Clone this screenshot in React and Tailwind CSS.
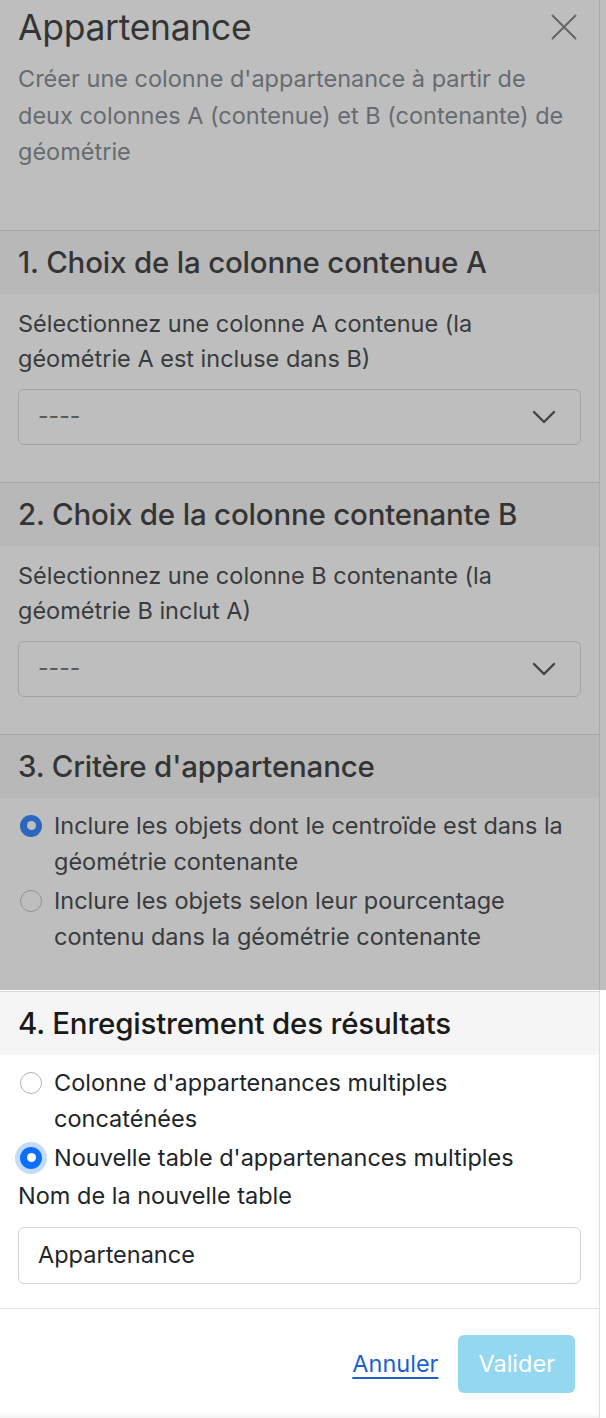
import React from 'react';

const font = { fontFamily: 'Inter, "Noto Sans", sans-serif' };

const Chevron = () => (
  <svg width="24" height="14" viewBox="0 0 24 14" fill="none">
    <path d="M2 2l10 10L22 2" stroke="#333" strokeWidth="2.4" strokeLinecap="round" strokeLinejoin="round" />
  </svg>
);

const Radio = ({ checked, focus }) => (
  <span
    className={
      'mt-[7px] w-[22px] h-[22px] shrink-0 rounded-full flex items-center justify-center ' +
      (checked ? 'bg-[#0d6efd] ' : 'border border-[#b5b5b5] bg-white ') +
      (focus ? 'ring-[5px] ring-[#0d6efd]/25' : '')
    }
  >
    {checked && <span className="w-[9px] h-[9px] rounded-full bg-white" />}
  </span>
);

const RadioRow = ({ checked, focus, children }) => (
  <label className="flex items-start gap-[12px] pl-[2px]">
    <Radio checked={checked} focus={focus} />
    <span className="text-[23.5px] leading-[36px] text-[#212529]">{children}</span>
  </label>
);

const SectionHeader = ({ children }) => (
  <div className="border-t border-[#d9d9d9] bg-[#f5f5f5] h-[64px] flex items-center px-[18px]">
    <h2 className="text-[29.5px] font-medium text-[#1a1a1a] tracking-[-0.2px]">{children}</h2>
  </div>
);

const Select = () => (
  <div className="mt-[13px] h-[56px] rounded-[6px] border border-[#ced4da] bg-white flex items-center justify-between pl-[19px] pr-[24px]">
    <span className="text-[23px] text-[#555]">----</span>
    <Chevron />
  </div>
);

export default function App() {
  return (
    <div className="relative h-[1418px] w-[606px] overflow-hidden bg-white flex" style={font}>
      <div className="w-[600px] border-r border-[#dedede] flex flex-col">
        {/* header */}
        <div className="px-[18px] pt-[8px] pb-[59px]">
          <div className="flex items-start justify-between">
            <h1 className="text-[35.5px] leading-[40px] text-[#1a1a1a] font-normal tracking-[-0.3px]">Appartenance</h1>
            <button className="mt-[6px] mr-[4px]">
              <svg width="26" height="26" viewBox="0 0 26 26" fill="none">
                <path d="M1.5 1.5l23 23M24.5 1.5l-23 23" stroke="#6c6c6c" strokeWidth="2" strokeLinecap="round" />
              </svg>
            </button>
          </div>
          <p className="mt-[13px] text-[23.5px] leading-[36.5px] text-[#6c757d]">
            Créer une colonne d'appartenance à partir de deux colonnes A (contenue) et B (contenante) de géométrie
          </p>
        </div>

        <SectionHeader>1. Choix de la colonne contenue A</SectionHeader>
        <div className="px-[18px] pt-[12px] pb-[37px]">
          <p className="text-[23.5px] leading-[35px] text-[#212529]">
            Sélectionnez une colonne A contenue (la géométrie A est incluse dans B)
          </p>
          <Select />
        </div>

        <SectionHeader>2. Choix de la colonne contenante B</SectionHeader>
        <div className="px-[18px] pt-[12px] pb-[37px]">
          <p className="text-[23.5px] leading-[35px] text-[#212529]">
            Sélectionnez une colonne B contenante (la géométrie B inclut A)
          </p>
          <Select />
        </div>

        <SectionHeader>3. Critère d'appartenance</SectionHeader>
        <div className="px-[18px] pt-[10px] pb-[34px] flex flex-col gap-[3px]">
          <RadioRow checked>Inclure les objets dont le centroïde est dans la géométrie contenante</RadioRow>
          <RadioRow>Inclure les objets selon leur pourcentage contenu dans la géométrie contenante</RadioRow>
        </div>

        <div className="border-t-2 border-white">
          <SectionHeader>4. Enregistrement des résultats</SectionHeader>
        </div>
        <div className="px-[18px] pt-[10px] pb-[24px]">
          <div className="flex flex-col gap-[3px]">
            <RadioRow>Colonne d'appartenances multiples concaténées</RadioRow>
            <RadioRow checked focus>Nouvelle table d'appartenances multiples</RadioRow>
          </div>
          <p className="text-[23.5px] leading-[36px] text-[#212529] mt-[2px]">Nom de la nouvelle table</p>
          <div className="mt-[13px] h-[57px] rounded-[6px] border border-[#ced4da] flex items-center pl-[19px]">
            <span className="text-[23.5px] text-[#212529]">Appartenance</span>
          </div>
        </div>

        <div className="border-t border-[#dee2e6] flex items-center justify-end gap-[20px] px-[24px] pt-[26px] pb-[20px]">
          <a href="#" className="text-[23.5px] text-[#1c5fd0] underline underline-offset-[5px]">Annuler</a>
          <button className="h-[58px] px-[20px] rounded-[6px] bg-[#93d8f0] text-white text-[23.5px]">Valider</button>
        </div>
        <div className="flex-1 bg-gradient-to-b from-white to-[#f3f3f3]" />
      </div>
      <div className="flex-1 bg-white" />

      {/* dimming over everything above step 4 */}
      <div className="absolute left-0 top-0 w-full h-[990px] bg-[#5c5c5c]/40" />
    </div>
  );
}
